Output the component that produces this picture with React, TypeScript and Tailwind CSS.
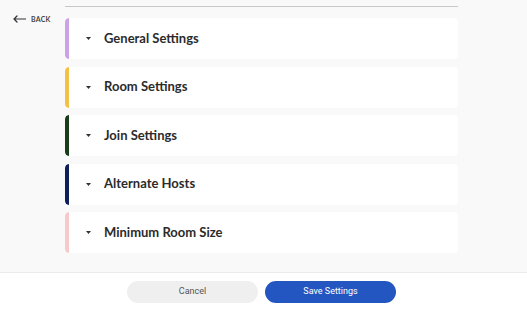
import React from "react";

const sections = [
  { title: "General Settings", color: "bg-[#c9a3e6]" },
  { title: "Room Settings", color: "bg-[#f4c145]" },
  { title: "Join Settings", color: "bg-[#163d17]" },
  { title: "Alternate Hosts", color: "bg-[#0f1f5a]" },
  { title: "Minimum Room Size", color: "bg-[#f6caca]" },
];

export default function App() {
  return (
    <div
      className="w-[527px] h-[314px] overflow-hidden flex flex-col bg-[#f9f9f9]"
      style={{ fontFamily: "Lato, 'Noto Sans', sans-serif" }}
    >
      <div className="flex-1 flex overflow-hidden">
        <div className="w-[65px] shrink-0 pl-[13px] pt-[14px]">
          <div className="flex items-center gap-[5px] text-[#444]">
            <svg width="13" height="8" viewBox="0 0 13 8" fill="none">
              <path d="M4 1 L1 4 L4 7 M1 4 H12.5" stroke="#333" strokeWidth="1.2" strokeLinecap="round" strokeLinejoin="round" />
            </svg>
            <span className="text-[7px] font-bold tracking-[0.2px]">BACK</span>
          </div>
        </div>
        <div className="w-[393px] shrink-0 -mt-[9px] flex flex-col">
          <div className="text-[8px] leading-[10px] text-[#999] pl-[1px]">Update room settings</div>
          <div className="h-[1px] bg-[#c8c8c8] mt-[5px]" />
          <div className="flex flex-col gap-[7.5px] mt-[11px]">
            {sections.map((s) => (
              <div key={s.title} className="h-[41px] bg-white rounded-[4px] flex items-center overflow-hidden">
                <div className={`w-[4px] h-full rounded-l-[4px] ${s.color}`} />
                <div className="pl-[17px] flex items-center">
                  <svg width="5" height="3" viewBox="0 0 5 3">
                    <path d="M0 0 H5 L2.5 3 Z" fill="#333" />
                  </svg>
                  <span className="ml-[13px] text-[13px] font-bold text-[#2b2b2b] tracking-[0px]">
                    {s.title}
                  </span>
                </div>
              </div>
            ))}
          </div>
        </div>
      </div>
      <div className="h-[42px] shrink-0 bg-white border-t border-[#ececec] flex items-start pt-[8px] justify-center gap-[7px] pr-[4px]">
        <button className="w-[131px] h-[22px] rounded-full bg-[#efefef] text-[#555] text-[9px]" style={{ fontFamily: "Roboto, sans-serif" }}>
          Cancel
        </button>
        <button className="w-[131px] h-[22px] rounded-full bg-[#2456c1] text-white text-[9px]" style={{ fontFamily: "Roboto, sans-serif" }}>
          Save Settings
        </button>
      </div>
    </div>
  );
}
